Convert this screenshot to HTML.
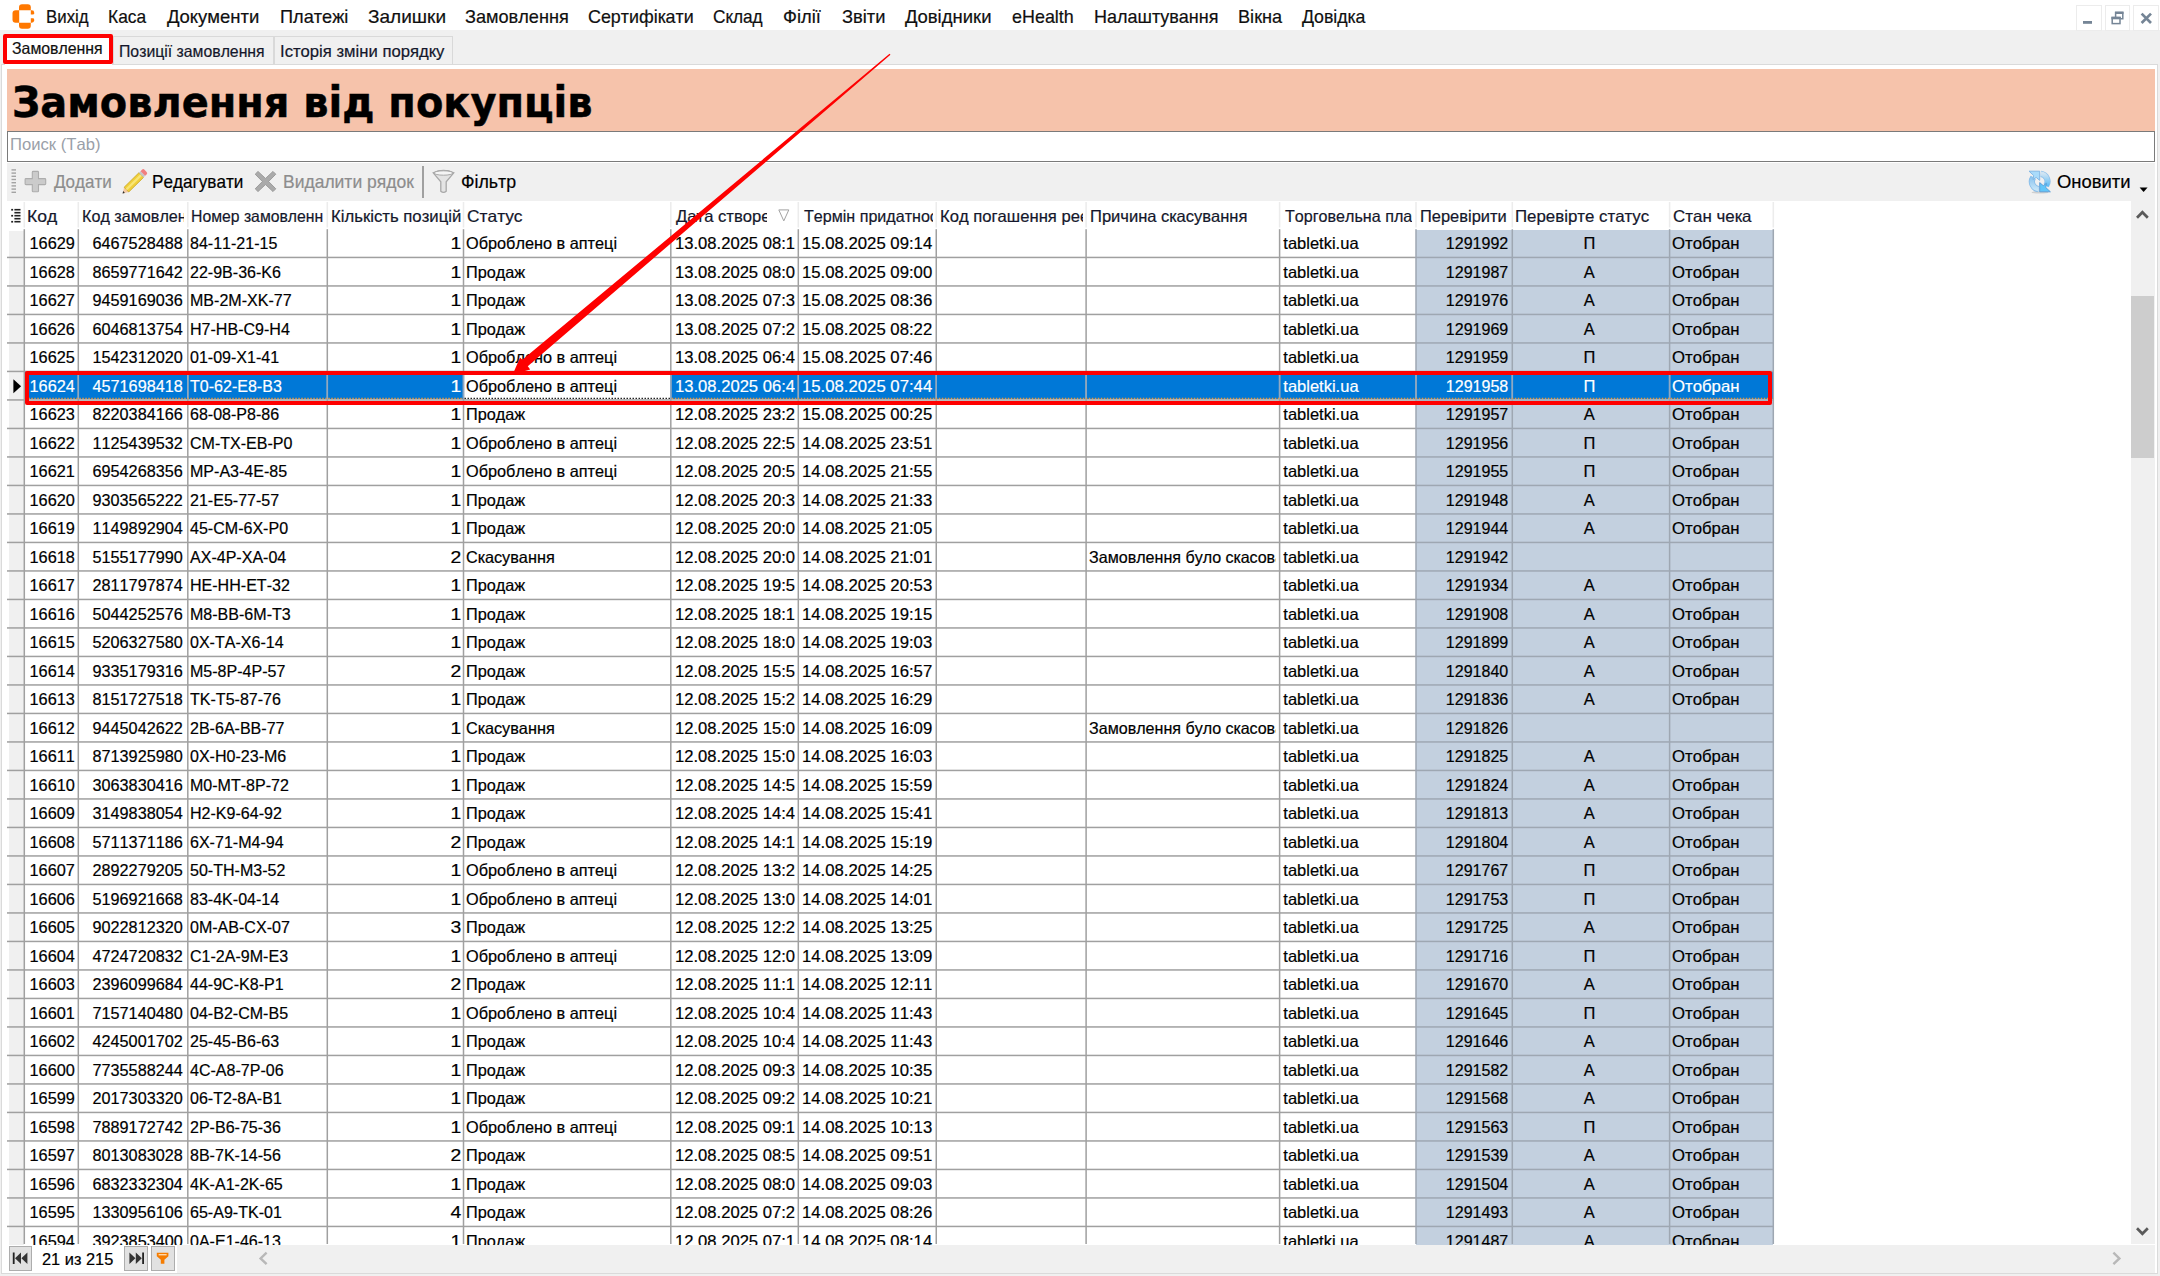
<!DOCTYPE html>
<html lang="uk"><head><meta charset="utf-8"><title>Замовлення від покупців</title>
<style>
html,body{margin:0;padding:0}
body{width:2160px;height:1276px;background:#f0f0f0;position:relative;overflow:hidden;font-family:"Liberation Sans",sans-serif;font-size:16.5px;color:#000;font-kerning:none}
div,span,svg{position:absolute;box-sizing:border-box}
.t{white-space:pre;transform-origin:0 0;line-height:1;-webkit-text-stroke:0.2px currentColor}
#menubar{left:0;top:0;width:2160px;height:30.2px;background:#fff}
.wb{top:5px;width:25.7px;height:25.7px;background:#fff;border:1px solid #ececec}
#page{left:1px;top:63.5px;width:2157px;height:1210px;background:#fff;border:1px solid #dadada}
.tab{top:36px;height:28px;background:#f0f0f0;border:1px solid #d9d9d9;border-bottom:none}
#title{left:7px;top:69px;width:2148px;height:62px;background:#f6c3ab}
#search{left:7px;top:131px;width:2148px;height:31px;background:#fff;border:1.5px solid #7a7a7a}
#toolbar{left:7px;top:163px;width:2148px;height:38px;background:#f0f0f0}
#grid{left:7px;top:201px;width:2124px;height:1043.6px;background:#fff;overflow:hidden}
#vscroll{left:2131px;top:201px;width:24px;height:1043px;background:#f0f0f0}
#thumb{left:2131px;top:295.5px;width:22.5px;height:162px;background:#cdcdcd}
#nav{left:7px;top:1244.6px;width:170px;height:28.4px;background:#fff}
#hscroll{left:177px;top:1244.6px;width:1978px;height:28.4px;background:#f0f0f0}
.nb{top:1246px;width:23.5px;height:24.5px;background:#e1e1e1;border:1px solid #adadad}
.c{overflow:hidden;height:28.5px}
.c>span{white-space:pre;line-height:1;top:5.8px;-webkit-text-stroke:0.2px currentColor}
.c>.l{transform-origin:0 0}
.c>.r{transform-origin:100% 0}
.c>.m{left:0;width:100%;text-align:center;transform-origin:50% 0}
.h{color:#14172b}
.h>span{top:7.0px}
.sel{color:#fff}
</style></head><body>
<div id="menubar"></div>
<svg style="left:11px;top:3px" width="26" height="27" viewBox="0 0 26 27" fill="#ff7800"><path d="M8 7.2 V4.2 Q8 1.2 11 1.2 H16.8 Q19.8 1.2 19.8 4.2 V7.2 Z"/><path d="M8 19.7 V22.75 Q8 25.75 11 25.75 H16.8 Q19.8 25.75 19.8 22.75 V19.7 Z"/><path d="M8.2 7.2 H4.7 Q1.5 7.2 1.5 10.4 V16.5 Q1.5 19.7 4.7 19.7 H8.2 Z"/><path d="M19.8 7.2 H20.8 Q23.2 7.2 23.2 9.6 V10.2 Q23.2 11.6 21.8 11.6 H19.8 Z"/><path d="M19.8 19.7 H20.8 Q23.2 19.7 23.2 17.3 V16.7 Q23.2 15.3 21.8 15.3 H19.8 Z"/></svg>
<span class="t" style="left:45.84px;top:8.06px;font-size:18.6px;transform:scaleX(0.9061);color:#101010">Вихід</span><span class="t" style="left:107.90px;top:8.06px;font-size:18.6px;transform:scaleX(0.9350);color:#101010">Каса</span><span class="t" style="left:167.45px;top:8.06px;font-size:18.6px;transform:scaleX(0.9956);color:#101010">Документи</span><span class="t" style="left:279.53px;top:8.06px;font-size:18.6px;transform:scaleX(0.9770);color:#101010">Платежі</span><span class="t" style="left:367.53px;top:8.06px;font-size:18.6px;transform:scaleX(1.0236);color:#101010">Залишки</span><span class="t" style="left:465.27px;top:8.06px;font-size:18.6px;transform:scaleX(0.9755);color:#101010">Замовлення</span><span class="t" style="left:588.34px;top:8.06px;font-size:18.6px;transform:scaleX(0.9619);color:#101010">Сертифікати</span><span class="t" style="left:713.37px;top:8.06px;font-size:18.6px;transform:scaleX(0.9263);color:#101010">Склад</span><span class="t" style="left:783.31px;top:8.06px;font-size:18.6px;transform:scaleX(0.9852);color:#101010">Філії</span><span class="t" style="left:841.96px;top:8.06px;font-size:18.6px;transform:scaleX(0.9833);color:#101010">Звіти</span><span class="t" style="left:905.45px;top:8.06px;font-size:18.6px;transform:scaleX(0.9942);color:#101010">Довідники</span><span class="t" style="left:1011.98px;top:8.06px;font-size:18.6px;transform:scaleX(0.9639);color:#101010">eHealth</span><span class="t" style="left:1093.55px;top:8.06px;font-size:18.6px;transform:scaleX(0.9678);color:#101010">Налаштування</span><span class="t" style="left:1237.54px;top:8.06px;font-size:18.6px;transform:scaleX(0.9760);color:#101010">Вікна</span><span class="t" style="left:1302.46px;top:8.06px;font-size:18.6px;transform:scaleX(0.9545);color:#101010">Довідка</span>
<div class="wb" style="left:2076px"></div><div class="wb" style="left:2104.6px"></div><div class="wb" style="left:2133px"></div><svg style="left:2076px;top:5px" width="84" height="26" viewBox="0 0 84 26" fill="none" stroke="#758596"><rect x="7" y="16" width="9" height="2.8" fill="#758596" stroke="none"/><path d="M39.6 12 v-4.4 h7.2 v6.2 h-2" stroke-width="1.5"/><path d="M39 7.8 h8.5" stroke-width="2.4"/><rect x="36.2" y="12.6" width="7.8" height="6" stroke-width="1.5"/><path d="M35.4 13 h9.4" stroke-width="2.6"/><path d="M65.6 8.6 l9.4 9.4 M75 8.6 l-9.4 9.4" stroke-width="2.7"/></svg>
<div class="tab" style="left:113px;width:161px"></div><div class="tab" style="left:273.5px;width:179px"></div>
<div id="page"></div>
<div style="left:5px;top:36px;width:107px;height:29px;background:#fff"></div>
<span class="t" style="left:12.12px;top:40.23px;font-size:16.5px;transform:scaleX(0.9606);color:#101010">Замовлення</span><span class="t" style="left:119.00px;top:43.03px;font-size:16.5px;transform:scaleX(0.9576);color:#14172b">Позиції замовлення</span><span class="t" style="left:280.49px;top:43.03px;font-size:16.5px;transform:scaleX(1.0096);color:#14172b">Історія зміни порядку</span>
<div style="left:3.2px;top:33.8px;width:109.8px;height:30.4px;border:4.3px solid #fe0000;border-radius:2px"></div>
<div id="title"></div><span class="t" style="font-family:'DejaVu Sans',sans-serif;font-weight:bold;font-kerning:none;-webkit-text-stroke:0.5px #000;left:12.23px;top:81.95px;font-size:42px;transform:scaleX(0.9496);">Замовлення від покупців</span>
<div id="search"></div><span class="t" style="left:9.54px;top:136.33px;font-size:16.5px;transform:scaleX(1.0080);color:#9aa0a8;-webkit-text-stroke:0">Поиск (Tab)</span>
<div id="toolbar"></div>
<svg style="left:11px;top:168px" width="6" height="26" viewBox="0 0 6 26"><rect x="0.5" y="1.2" width="4.5" height="1.4" fill="#a3a3a3"/><rect x="0.5" y="4.4" width="4.5" height="1.4" fill="#a3a3a3"/><rect x="0.5" y="7.6" width="4.5" height="1.4" fill="#a3a3a3"/><rect x="0.5" y="10.8" width="4.5" height="1.4" fill="#a3a3a3"/><rect x="0.5" y="14.0" width="4.5" height="1.4" fill="#a3a3a3"/><rect x="0.5" y="17.2" width="4.5" height="1.4" fill="#a3a3a3"/><rect x="0.5" y="20.4" width="4.5" height="1.4" fill="#a3a3a3"/><rect x="0.5" y="23.6" width="4.5" height="1.4" fill="#a3a3a3"/></svg><svg style="left:24px;top:170px" width="23" height="23" viewBox="0 0 23 23"><path d="M9.2 1.4 h4.4 q0.9 0 0.9 0.9 v6.3 h6.3 q0.9 0 0.9 0.9 v4.2 q0 0.9 -0.9 0.9 h-6.3 v6.3 q0 0.9 -0.9 0.9 h-4.4 q-0.9 0 -0.9 -0.9 v-6.3 h-6.3 q-0.9 0 -0.9 -0.9 v-4.2 q0 -0.9 0.9 -0.9 h6.3 v-6.3 q0 -0.9 0.9 -0.9 z" fill="#cbcbcb" stroke="#adadad" stroke-width="1.1"/></svg><svg style="left:120px;top:167px" width="29" height="29" viewBox="0 0 29 29"><g transform="translate(2.6 26.4) rotate(-44.5)"><path d="M0 0 l5.4 -3.3 v6.6 z" fill="#f3c9a3"/><path d="M0 0 l2 -1.25 v2.5 z" fill="#2b2b2b"/><rect x="5.4" y="-3.3" width="20.6" height="6.6" fill="#f0cf3a" stroke="#c5a21c" stroke-width="0.7"/><rect x="5.4" y="-1.2" width="20.6" height="2.2" fill="#f9e676"/><rect x="26" y="-3.3" width="2.4" height="6.6" fill="#c6c6c6"/><path d="M28.4 -3.3 h2 q1.8 0 1.8 1.8 v3 q0 1.8 -1.8 1.8 h-2 z" fill="#f17f7f"/></g></svg><svg style="left:253.5px;top:170px" width="23" height="23" viewBox="0 0 23 23"><path d="M4 1.4 l7.5 7 l7.5 -7 l2.8 2.8 l-7.2 7.3 l7.2 7.3 l-2.8 2.8 l-7.5 -7 l-7.5 7 l-2.8 -2.8 l7.2 -7.3 l-7.2 -7.3 z" fill="#aaaaaa" stroke="#909090" stroke-width="0.8"/></svg><div style="left:422.3px;top:165.5px;width:1.5px;height:32.5px;background:#a0a0a0"></div><svg style="left:432px;top:169px" width="23" height="26" viewBox="0 0 23 26"><path d="M1.2 3.8 q10.3 -4.6 20.6 0 l-7.6 9 v9.4 q-2.7 2.4 -5.4 0 v-9.4 z" fill="#e4e4e4" stroke="#a8a8a8" stroke-width="1.3"/><ellipse cx="11.5" cy="4" rx="9.4" ry="2.2" fill="#f5f5f5" stroke="#a8a8a8" stroke-width="1"/></svg><span class="t" style="left:54.18px;top:171.52px;font-size:19px;transform:scaleX(0.8956);color:#8d8d8d">Додати</span><span class="t" style="left:151.65px;top:171.52px;font-size:19px;transform:scaleX(0.9025);color:#000">Редагувати</span><span class="t" style="left:282.82px;top:171.52px;font-size:19px;transform:scaleX(0.9210);color:#8d8d8d">Видалити рядок</span><span class="t" style="left:461.27px;top:171.52px;font-size:19px;transform:scaleX(0.9345);color:#000">Фільтр</span><span class="t" style="left:2056.93px;top:171.52px;font-size:19px;transform:scaleX(0.9701);color:#000">Оновити</span><svg style="left:2028px;top:170px" width="24" height="24" viewBox="0 0 24 24"><defs><linearGradient id="ga" x1="0" y1="0" x2="0" y2="1"><stop offset="0" stop-color="#8cc4ef"/><stop offset="1" stop-color="#c4e4f8"/></linearGradient><linearGradient id="gb" x1="0" y1="1" x2="0" y2="0"><stop offset="0" stop-color="#5fbdf5"/><stop offset="1" stop-color="#cfe4f3"/></linearGradient></defs><ellipse cx="12" cy="22.4" rx="8.5" ry="1.2" fill="#cfcfcf"/><path d="M5.2 7.4 A7.6 7.6 0 0 0 10.6 19.2" fill="none" stroke="#86bbe8" stroke-width="6.2"/><path d="M5.2 7.4 A7.6 7.6 0 0 0 10.6 19.2" fill="none" stroke="url(#ga)" stroke-width="4.6"/><path d="M1 1.2 H11.7 V10.4 L8.2 7.4 L5 9.6 L5.6 5.4 z" fill="#a9dbfb" stroke="#7db3e3" stroke-width="0.9"/><path d="M18.2 15.6 A7.6 7.6 0 0 0 12.8 3.8" fill="none" stroke="#8fc0ea" stroke-width="6.2"/><path d="M18.2 15.6 A7.6 7.6 0 0 0 12.8 3.8" fill="none" stroke="url(#gb)" stroke-width="4.6"/><path d="M22.4 21.8 H11.7 V12.6 L15.2 15.6 L18.4 13.4 L17.8 17.6 z" fill="#62c6f9" stroke="#5b9bd5" stroke-width="0.9"/></svg><svg style="left:2139px;top:187px" width="10" height="6" viewBox="0 0 10 6"><path d="M0.6 0.6 h8 l-4 4.4 z" fill="#000"/></svg>
<div id="grid">
<div style="left:1.5px;top:30.19999999999999px;width:15px;height:1043px;background:#f0f0f0"></div><div style="left:1409px;top:28.69999999999999px;width:357.29999999999995px;height:1043px;background:#c3d0df"></div><div style="left:17.3px;top:171.2px;width:1749.0px;height:27.0px;background:#0078d7"></div><div style="left:457.25px;top:171.2px;width:205.79999999999995px;height:27.0px;background:#fff"></div>
<svg style="left:0;top:0" width="2124" height="1043" viewBox="7 201 2124 1043"><rect x="7" y="256.7" width="1409" height="1.5" fill="#a0a0a0"/><rect x="1416" y="256.7" width="357.29999999999995" height="1.5" fill="#9ea7b2"/><rect x="7" y="285.2" width="1409" height="1.5" fill="#a0a0a0"/><rect x="1416" y="285.2" width="357.29999999999995" height="1.5" fill="#9ea7b2"/><rect x="7" y="313.7" width="1409" height="1.5" fill="#a0a0a0"/><rect x="1416" y="313.7" width="357.29999999999995" height="1.5" fill="#9ea7b2"/><rect x="7" y="342.2" width="1409" height="1.5" fill="#a0a0a0"/><rect x="1416" y="342.2" width="357.29999999999995" height="1.5" fill="#9ea7b2"/><rect x="7" y="370.7" width="1409" height="1.5" fill="#a0a0a0"/><rect x="1416" y="370.7" width="357.29999999999995" height="1.5" fill="#9ea7b2"/><rect x="7" y="399.2" width="1409" height="1.5" fill="#a0a0a0"/><rect x="1416" y="399.2" width="357.29999999999995" height="1.5" fill="#9ea7b2"/><rect x="7" y="427.7" width="1409" height="1.5" fill="#a0a0a0"/><rect x="1416" y="427.7" width="357.29999999999995" height="1.5" fill="#9ea7b2"/><rect x="7" y="456.2" width="1409" height="1.5" fill="#a0a0a0"/><rect x="1416" y="456.2" width="357.29999999999995" height="1.5" fill="#9ea7b2"/><rect x="7" y="484.7" width="1409" height="1.5" fill="#a0a0a0"/><rect x="1416" y="484.7" width="357.29999999999995" height="1.5" fill="#9ea7b2"/><rect x="7" y="513.2" width="1409" height="1.5" fill="#a0a0a0"/><rect x="1416" y="513.2" width="357.29999999999995" height="1.5" fill="#9ea7b2"/><rect x="7" y="541.7" width="1409" height="1.5" fill="#a0a0a0"/><rect x="1416" y="541.7" width="357.29999999999995" height="1.5" fill="#9ea7b2"/><rect x="7" y="570.2" width="1409" height="1.5" fill="#a0a0a0"/><rect x="1416" y="570.2" width="357.29999999999995" height="1.5" fill="#9ea7b2"/><rect x="7" y="598.7" width="1409" height="1.5" fill="#a0a0a0"/><rect x="1416" y="598.7" width="357.29999999999995" height="1.5" fill="#9ea7b2"/><rect x="7" y="627.2" width="1409" height="1.5" fill="#a0a0a0"/><rect x="1416" y="627.2" width="357.29999999999995" height="1.5" fill="#9ea7b2"/><rect x="7" y="655.7" width="1409" height="1.5" fill="#a0a0a0"/><rect x="1416" y="655.7" width="357.29999999999995" height="1.5" fill="#9ea7b2"/><rect x="7" y="684.2" width="1409" height="1.5" fill="#a0a0a0"/><rect x="1416" y="684.2" width="357.29999999999995" height="1.5" fill="#9ea7b2"/><rect x="7" y="712.7" width="1409" height="1.5" fill="#a0a0a0"/><rect x="1416" y="712.7" width="357.29999999999995" height="1.5" fill="#9ea7b2"/><rect x="7" y="741.2" width="1409" height="1.5" fill="#a0a0a0"/><rect x="1416" y="741.2" width="357.29999999999995" height="1.5" fill="#9ea7b2"/><rect x="7" y="769.7" width="1409" height="1.5" fill="#a0a0a0"/><rect x="1416" y="769.7" width="357.29999999999995" height="1.5" fill="#9ea7b2"/><rect x="7" y="798.2" width="1409" height="1.5" fill="#a0a0a0"/><rect x="1416" y="798.2" width="357.29999999999995" height="1.5" fill="#9ea7b2"/><rect x="7" y="826.7" width="1409" height="1.5" fill="#a0a0a0"/><rect x="1416" y="826.7" width="357.29999999999995" height="1.5" fill="#9ea7b2"/><rect x="7" y="855.2" width="1409" height="1.5" fill="#a0a0a0"/><rect x="1416" y="855.2" width="357.29999999999995" height="1.5" fill="#9ea7b2"/><rect x="7" y="883.7" width="1409" height="1.5" fill="#a0a0a0"/><rect x="1416" y="883.7" width="357.29999999999995" height="1.5" fill="#9ea7b2"/><rect x="7" y="912.2" width="1409" height="1.5" fill="#a0a0a0"/><rect x="1416" y="912.2" width="357.29999999999995" height="1.5" fill="#9ea7b2"/><rect x="7" y="940.7" width="1409" height="1.5" fill="#a0a0a0"/><rect x="1416" y="940.7" width="357.29999999999995" height="1.5" fill="#9ea7b2"/><rect x="7" y="969.2" width="1409" height="1.5" fill="#a0a0a0"/><rect x="1416" y="969.2" width="357.29999999999995" height="1.5" fill="#9ea7b2"/><rect x="7" y="997.7" width="1409" height="1.5" fill="#a0a0a0"/><rect x="1416" y="997.7" width="357.29999999999995" height="1.5" fill="#9ea7b2"/><rect x="7" y="1026.2" width="1409" height="1.5" fill="#a0a0a0"/><rect x="1416" y="1026.2" width="357.29999999999995" height="1.5" fill="#9ea7b2"/><rect x="7" y="1054.7" width="1409" height="1.5" fill="#a0a0a0"/><rect x="1416" y="1054.7" width="357.29999999999995" height="1.5" fill="#9ea7b2"/><rect x="7" y="1083.2" width="1409" height="1.5" fill="#a0a0a0"/><rect x="1416" y="1083.2" width="357.29999999999995" height="1.5" fill="#9ea7b2"/><rect x="7" y="1111.7" width="1409" height="1.5" fill="#a0a0a0"/><rect x="1416" y="1111.7" width="357.29999999999995" height="1.5" fill="#9ea7b2"/><rect x="7" y="1140.2" width="1409" height="1.5" fill="#a0a0a0"/><rect x="1416" y="1140.2" width="357.29999999999995" height="1.5" fill="#9ea7b2"/><rect x="7" y="1168.7" width="1409" height="1.5" fill="#a0a0a0"/><rect x="1416" y="1168.7" width="357.29999999999995" height="1.5" fill="#9ea7b2"/><rect x="7" y="1197.2" width="1409" height="1.5" fill="#a0a0a0"/><rect x="1416" y="1197.2" width="357.29999999999995" height="1.5" fill="#9ea7b2"/><rect x="7" y="1225.7" width="1409" height="1.5" fill="#a0a0a0"/><rect x="1416" y="1225.7" width="357.29999999999995" height="1.5" fill="#9ea7b2"/><rect x="7" y="1254.2" width="1409" height="1.5" fill="#a0a0a0"/><rect x="1416" y="1254.2" width="357.29999999999995" height="1.5" fill="#9ea7b2"/><rect x="23.55" y="229.2" width="1.5" height="1020" fill="#a0a0a0"/><rect x="23.55" y="202" width="1.5" height="25.5" fill="#ececec"/><rect x="77.55" y="229.2" width="1.5" height="1020" fill="#a0a0a0"/><rect x="77.55" y="202" width="1.5" height="25.5" fill="#ececec"/><rect x="187.05" y="229.2" width="1.5" height="1020" fill="#a0a0a0"/><rect x="187.05" y="202" width="1.5" height="25.5" fill="#ececec"/><rect x="326.55" y="229.2" width="1.5" height="1020" fill="#a0a0a0"/><rect x="326.55" y="202" width="1.5" height="25.5" fill="#ececec"/><rect x="462.75" y="229.2" width="1.5" height="1020" fill="#a0a0a0"/><rect x="462.75" y="202" width="1.5" height="25.5" fill="#ececec"/><rect x="670.05" y="229.2" width="1.5" height="1020" fill="#a0a0a0"/><rect x="670.05" y="202" width="1.5" height="25.5" fill="#ececec"/><rect x="797.55" y="229.2" width="1.5" height="1020" fill="#a0a0a0"/><rect x="797.55" y="202" width="1.5" height="25.5" fill="#ececec"/><rect x="935.5" y="229.2" width="1.5" height="1020" fill="#a0a0a0"/><rect x="935.5" y="202" width="1.5" height="25.5" fill="#ececec"/><rect x="1085.35" y="229.2" width="1.5" height="1020" fill="#a0a0a0"/><rect x="1085.35" y="202" width="1.5" height="25.5" fill="#ececec"/><rect x="1278.85" y="229.2" width="1.5" height="1020" fill="#a0a0a0"/><rect x="1278.85" y="202" width="1.5" height="25.5" fill="#ececec"/><rect x="1415.25" y="229.2" width="1.5" height="1020" fill="#9ea7b2"/><rect x="1415.25" y="202" width="1.5" height="25.5" fill="#ececec"/><rect x="1511.55" y="229.2" width="1.5" height="1020" fill="#9ea7b2"/><rect x="1511.55" y="202" width="1.5" height="25.5" fill="#ececec"/><rect x="1668.85" y="229.2" width="1.5" height="1020" fill="#9ea7b2"/><rect x="1668.85" y="202" width="1.5" height="25.5" fill="#ececec"/><rect x="1772.55" y="229.2" width="1.5" height="1020" fill="#9ea7b2"/><rect x="1772.55" y="202" width="1.5" height="25.5" fill="#ececec"/><rect x="77.55" y="372.2" width="1.5" height="27.0" fill="#8fa9c4"/><rect x="187.05" y="372.2" width="1.5" height="27.0" fill="#8fa9c4"/><rect x="326.55" y="372.2" width="1.5" height="27.0" fill="#8fa9c4"/><rect x="462.75" y="372.2" width="1.5" height="27.0" fill="#8fa9c4"/><rect x="670.05" y="372.2" width="1.5" height="27.0" fill="#8fa9c4"/><rect x="797.55" y="372.2" width="1.5" height="27.0" fill="#8fa9c4"/><rect x="935.5" y="372.2" width="1.5" height="27.0" fill="#8fa9c4"/><rect x="1085.35" y="372.2" width="1.5" height="27.0" fill="#8fa9c4"/><rect x="1278.85" y="372.2" width="1.5" height="27.0" fill="#8fa9c4"/><rect x="1415.25" y="372.2" width="1.5" height="27.0" fill="#8fa9c4"/><rect x="1511.55" y="372.2" width="1.5" height="27.0" fill="#8fa9c4"/><rect x="1668.85" y="372.2" width="1.5" height="27.0" fill="#8fa9c4"/><path d="M25.3 398.3 H463.5" stroke="#e8963c" stroke-width="1.2" stroke-dasharray="1.5 1.5" fill="none"/><path d="M464.5 398.3 H670.8" stroke="#222" stroke-width="1.2" stroke-dasharray="1.5 1.5" fill="none"/><path d="M671.8 398.3 H1773.3" stroke="#e8963c" stroke-width="1.2" stroke-dasharray="1.5 1.5" fill="none"/></svg>
<div class="c h" style="left:18.05px;top:0;width:52.50px"><span class="l" style="left:2.37px;transform:scaleX(1.0648)">Код</span></div><div class="c h" style="left:72.05px;top:0;width:104.85px"><span class="l" style="left:2.93px;transform:scaleX(0.9796)">Код замовлення</span></div><div class="c h" style="left:181.55px;top:0;width:134.75px"><span class="l" style="left:2.76px;transform:scaleX(0.9551)">Номер замовлення</span></div><div class="c h" style="left:321.05px;top:0;width:134.70px"><span class="l" style="left:2.68px;transform:scaleX(1.0131)">Кількість позицій</span></div><div class="c h" style="left:457.25px;top:0;width:205.80px"><span class="l" style="left:3.21px;transform:scaleX(1.0534)">Статус</span></div><div class="c h" style="left:664.55px;top:0;width:95.45px"><span class="l" style="left:4.45px;transform:scaleX(1.0083)">Дата створення</span></div><div class="c h" style="left:792.05px;top:0;width:133.95px"><span class="l" style="left:4.46px;transform:scaleX(0.9747)">Термін придатності</span></div><div class="c h" style="left:930.00px;top:0;width:145.50px"><span class="l" style="left:3.14px;transform:scaleX(1.0084)">Код погашення реєстру</span></div><div class="c h" style="left:1079.85px;top:0;width:192.00px"><span class="l" style="left:2.90px;transform:scaleX(1.0016)">Причина скасування</span></div><div class="c h" style="left:1273.35px;top:0;width:131.65px"><span class="l" style="left:4.71px;transform:scaleX(0.9758)">Торговельна платформа</span></div><div class="c h" style="left:1409.75px;top:0;width:94.80px"><span class="l" style="left:3.40px;transform:scaleX(0.9964)">Перевірити</span></div><div class="c h" style="left:1506.05px;top:0;width:155.80px"><span class="l" style="left:2.17px;transform:scaleX(1.0212)">Перевірте статус</span></div><div class="c h" style="left:1663.35px;top:0;width:102.20px"><span class="l" style="left:2.88px;transform:scaleX(1.0264)">Стан чека</span></div>
<svg style="left:4px;top:6.5px" width="10" height="16" viewBox="0 0 10 16"><rect x="3.4" y="0.90" width="6.1" height="1.6" fill="#222"/><rect x="3.4" y="3.90" width="6.1" height="1.6" fill="#222"/><rect x="3.4" y="6.90" width="6.1" height="1.6" fill="#222"/><rect x="3.4" y="9.90" width="6.1" height="1.6" fill="#222"/><rect x="3.4" y="12.90" width="6.1" height="1.6" fill="#222"/><rect x="0.2" y="0.90" width="1.9" height="1.7" fill="#222"/><rect x="0.2" y="6.90" width="1.9" height="1.7" fill="#222"/><rect x="0.2" y="12.90" width="1.9" height="1.7" fill="#222"/></svg><svg style="left:770.5px;top:7.5px" width="12" height="13" viewBox="0 0 12 13"><path d="M0.8 0.9 h10 l-5 11 z" fill="#fff" stroke="#a2a2a2" stroke-width="1"/></svg>
<div class="c" style="left:18.05px;top:28.70px;width:52.50px"><span class="r" style="right:2.92px;transform:scaleX(0.9886)">16629</span></div><div class="c" style="left:72.05px;top:28.70px;width:108.00px"><span class="r" style="right:3.80px;transform:scaleX(0.9834)">6467528488</span></div><div class="c" style="left:181.55px;top:28.70px;width:138.00px"><span class="l" style="left:1.72px;transform:scaleX(0.9721)">84-11-21-15</span></div><div class="c" style="left:321.05px;top:28.70px;width:134.70px"><span class="r" style="right:1.75px;transform:scaleX(1.1733)">1</span></div><div class="c" style="left:457.25px;top:28.70px;width:205.80px"><span class="l" style="left:2.01px;transform:scaleX(0.9868)">Оброблено в аптеці</span></div><div class="c" style="left:664.55px;top:28.70px;width:123.45px"><span class="l" style="left:3.59px;transform:scaleX(1.0064)">13.08.2025 08:14</span></div><div class="c" style="left:792.05px;top:28.70px;width:136.45px"><span class="l" style="left:2.68px;transform:scaleX(1.0138)">15.08.2025 09:14</span></div><div class="c" style="left:1273.35px;top:28.70px;width:134.90px"><span class="l" style="left:3.00px;transform:scaleX(1.0000)">tabletki.ua</span></div><div class="c" style="left:1409.75px;top:28.70px;width:94.80px"><span class="r" style="right:3.32px;transform:scaleX(0.9719)">1291992</span></div><div class="c" style="left:1506.05px;top:28.70px;width:155.80px"><span class="m" style="left:-1.65px">П</span></div><div class="c" style="left:1663.35px;top:28.70px;width:102.20px"><span class="l" style="left:1.39px;transform:scaleX(1.0155)">Отобран</span></div>
<div class="c" style="left:18.05px;top:57.20px;width:52.50px"><span class="r" style="right:2.92px;transform:scaleX(0.9886)">16628</span></div><div class="c" style="left:72.05px;top:57.20px;width:108.00px"><span class="r" style="right:3.80px;transform:scaleX(0.9834)">8659771642</span></div><div class="c" style="left:181.55px;top:57.20px;width:138.00px"><span class="l" style="left:1.72px;transform:scaleX(0.9721)">22-9B-36-K6</span></div><div class="c" style="left:321.05px;top:57.20px;width:134.70px"><span class="r" style="right:1.75px;transform:scaleX(1.1733)">1</span></div><div class="c" style="left:457.25px;top:57.20px;width:205.80px"><span class="l" style="left:2.01px;transform:scaleX(0.9868)">Продаж</span></div><div class="c" style="left:664.55px;top:57.20px;width:123.45px"><span class="l" style="left:3.59px;transform:scaleX(1.0064)">13.08.2025 08:00</span></div><div class="c" style="left:792.05px;top:57.20px;width:136.45px"><span class="l" style="left:2.68px;transform:scaleX(1.0138)">15.08.2025 09:00</span></div><div class="c" style="left:1273.35px;top:57.20px;width:134.90px"><span class="l" style="left:3.00px;transform:scaleX(1.0000)">tabletki.ua</span></div><div class="c" style="left:1409.75px;top:57.20px;width:94.80px"><span class="r" style="right:3.32px;transform:scaleX(0.9719)">1291987</span></div><div class="c" style="left:1506.05px;top:57.20px;width:155.80px"><span class="m" style="left:-1.65px">А</span></div><div class="c" style="left:1663.35px;top:57.20px;width:102.20px"><span class="l" style="left:1.39px;transform:scaleX(1.0155)">Отобран</span></div>
<div class="c" style="left:18.05px;top:85.70px;width:52.50px"><span class="r" style="right:2.92px;transform:scaleX(0.9886)">16627</span></div><div class="c" style="left:72.05px;top:85.70px;width:108.00px"><span class="r" style="right:3.80px;transform:scaleX(0.9834)">9459169036</span></div><div class="c" style="left:181.55px;top:85.70px;width:138.00px"><span class="l" style="left:1.72px;transform:scaleX(0.9721)">MB-2M-XK-77</span></div><div class="c" style="left:321.05px;top:85.70px;width:134.70px"><span class="r" style="right:1.75px;transform:scaleX(1.1733)">1</span></div><div class="c" style="left:457.25px;top:85.70px;width:205.80px"><span class="l" style="left:2.01px;transform:scaleX(0.9868)">Продаж</span></div><div class="c" style="left:664.55px;top:85.70px;width:123.45px"><span class="l" style="left:3.59px;transform:scaleX(1.0064)">13.08.2025 07:36</span></div><div class="c" style="left:792.05px;top:85.70px;width:136.45px"><span class="l" style="left:2.68px;transform:scaleX(1.0138)">15.08.2025 08:36</span></div><div class="c" style="left:1273.35px;top:85.70px;width:134.90px"><span class="l" style="left:3.00px;transform:scaleX(1.0000)">tabletki.ua</span></div><div class="c" style="left:1409.75px;top:85.70px;width:94.80px"><span class="r" style="right:3.32px;transform:scaleX(0.9719)">1291976</span></div><div class="c" style="left:1506.05px;top:85.70px;width:155.80px"><span class="m" style="left:-1.65px">А</span></div><div class="c" style="left:1663.35px;top:85.70px;width:102.20px"><span class="l" style="left:1.39px;transform:scaleX(1.0155)">Отобран</span></div>
<div class="c" style="left:18.05px;top:114.20px;width:52.50px"><span class="r" style="right:2.92px;transform:scaleX(0.9886)">16626</span></div><div class="c" style="left:72.05px;top:114.20px;width:108.00px"><span class="r" style="right:3.80px;transform:scaleX(0.9834)">6046813754</span></div><div class="c" style="left:181.55px;top:114.20px;width:138.00px"><span class="l" style="left:1.72px;transform:scaleX(0.9721)">H7-HB-C9-H4</span></div><div class="c" style="left:321.05px;top:114.20px;width:134.70px"><span class="r" style="right:1.75px;transform:scaleX(1.1733)">1</span></div><div class="c" style="left:457.25px;top:114.20px;width:205.80px"><span class="l" style="left:2.01px;transform:scaleX(0.9868)">Продаж</span></div><div class="c" style="left:664.55px;top:114.20px;width:123.45px"><span class="l" style="left:3.59px;transform:scaleX(1.0064)">13.08.2025 07:22</span></div><div class="c" style="left:792.05px;top:114.20px;width:136.45px"><span class="l" style="left:2.68px;transform:scaleX(1.0138)">15.08.2025 08:22</span></div><div class="c" style="left:1273.35px;top:114.20px;width:134.90px"><span class="l" style="left:3.00px;transform:scaleX(1.0000)">tabletki.ua</span></div><div class="c" style="left:1409.75px;top:114.20px;width:94.80px"><span class="r" style="right:3.32px;transform:scaleX(0.9719)">1291969</span></div><div class="c" style="left:1506.05px;top:114.20px;width:155.80px"><span class="m" style="left:-1.65px">А</span></div><div class="c" style="left:1663.35px;top:114.20px;width:102.20px"><span class="l" style="left:1.39px;transform:scaleX(1.0155)">Отобран</span></div>
<div class="c" style="left:18.05px;top:142.70px;width:52.50px"><span class="r" style="right:2.92px;transform:scaleX(0.9886)">16625</span></div><div class="c" style="left:72.05px;top:142.70px;width:108.00px"><span class="r" style="right:3.80px;transform:scaleX(0.9834)">1542312020</span></div><div class="c" style="left:181.55px;top:142.70px;width:138.00px"><span class="l" style="left:1.72px;transform:scaleX(0.9721)">01-09-X1-41</span></div><div class="c" style="left:321.05px;top:142.70px;width:134.70px"><span class="r" style="right:1.75px;transform:scaleX(1.1733)">1</span></div><div class="c" style="left:457.25px;top:142.70px;width:205.80px"><span class="l" style="left:2.01px;transform:scaleX(0.9868)">Оброблено в аптеці</span></div><div class="c" style="left:664.55px;top:142.70px;width:123.45px"><span class="l" style="left:3.59px;transform:scaleX(1.0064)">13.08.2025 06:46</span></div><div class="c" style="left:792.05px;top:142.70px;width:136.45px"><span class="l" style="left:2.68px;transform:scaleX(1.0138)">15.08.2025 07:46</span></div><div class="c" style="left:1273.35px;top:142.70px;width:134.90px"><span class="l" style="left:3.00px;transform:scaleX(1.0000)">tabletki.ua</span></div><div class="c" style="left:1409.75px;top:142.70px;width:94.80px"><span class="r" style="right:3.32px;transform:scaleX(0.9719)">1291959</span></div><div class="c" style="left:1506.05px;top:142.70px;width:155.80px"><span class="m" style="left:-1.65px">П</span></div><div class="c" style="left:1663.35px;top:142.70px;width:102.20px"><span class="l" style="left:1.39px;transform:scaleX(1.0155)">Отобран</span></div>
<div class="c sel" style="left:18.05px;top:171.20px;width:52.50px"><span class="r" style="right:2.92px;transform:scaleX(0.9886)">16624</span></div><div class="c sel" style="left:72.05px;top:171.20px;width:108.00px"><span class="r" style="right:3.80px;transform:scaleX(0.9834)">4571698418</span></div><div class="c sel" style="left:181.55px;top:171.20px;width:138.00px"><span class="l" style="left:1.72px;transform:scaleX(0.9721)">T0-62-E8-B3</span></div><div class="c sel" style="left:321.05px;top:171.20px;width:134.70px"><span class="r" style="right:1.75px;transform:scaleX(1.1733)">1</span></div><div class="c" style="left:457.25px;top:171.20px;width:205.80px"><span class="l" style="left:2.01px;transform:scaleX(0.9868)">Оброблено в аптеці</span></div><div class="c sel" style="left:664.55px;top:171.20px;width:123.45px"><span class="l" style="left:3.59px;transform:scaleX(1.0064)">13.08.2025 06:44</span></div><div class="c sel" style="left:792.05px;top:171.20px;width:136.45px"><span class="l" style="left:2.68px;transform:scaleX(1.0138)">15.08.2025 07:44</span></div><div class="c sel" style="left:1273.35px;top:171.20px;width:134.90px"><span class="l" style="left:3.00px;transform:scaleX(1.0000)">tabletki.ua</span></div><div class="c sel" style="left:1409.75px;top:171.20px;width:94.80px"><span class="r" style="right:3.32px;transform:scaleX(0.9719)">1291958</span></div><div class="c sel" style="left:1506.05px;top:171.20px;width:155.80px"><span class="m" style="left:-1.65px">П</span></div><div class="c sel" style="left:1663.35px;top:171.20px;width:102.20px"><span class="l" style="left:1.39px;transform:scaleX(1.0155)">Отобран</span></div>
<div class="c" style="left:18.05px;top:199.70px;width:52.50px"><span class="r" style="right:2.92px;transform:scaleX(0.9886)">16623</span></div><div class="c" style="left:72.05px;top:199.70px;width:108.00px"><span class="r" style="right:3.80px;transform:scaleX(0.9834)">8220384166</span></div><div class="c" style="left:181.55px;top:199.70px;width:138.00px"><span class="l" style="left:1.72px;transform:scaleX(0.9721)">68-08-P8-86</span></div><div class="c" style="left:321.05px;top:199.70px;width:134.70px"><span class="r" style="right:1.75px;transform:scaleX(1.1733)">1</span></div><div class="c" style="left:457.25px;top:199.70px;width:205.80px"><span class="l" style="left:2.01px;transform:scaleX(0.9868)">Продаж</span></div><div class="c" style="left:664.55px;top:199.70px;width:123.45px"><span class="l" style="left:3.59px;transform:scaleX(1.0064)">12.08.2025 23:25</span></div><div class="c" style="left:792.05px;top:199.70px;width:136.45px"><span class="l" style="left:2.68px;transform:scaleX(1.0138)">15.08.2025 00:25</span></div><div class="c" style="left:1273.35px;top:199.70px;width:134.90px"><span class="l" style="left:3.00px;transform:scaleX(1.0000)">tabletki.ua</span></div><div class="c" style="left:1409.75px;top:199.70px;width:94.80px"><span class="r" style="right:3.32px;transform:scaleX(0.9719)">1291957</span></div><div class="c" style="left:1506.05px;top:199.70px;width:155.80px"><span class="m" style="left:-1.65px">А</span></div><div class="c" style="left:1663.35px;top:199.70px;width:102.20px"><span class="l" style="left:1.39px;transform:scaleX(1.0155)">Отобран</span></div>
<div class="c" style="left:18.05px;top:228.20px;width:52.50px"><span class="r" style="right:2.92px;transform:scaleX(0.9886)">16622</span></div><div class="c" style="left:72.05px;top:228.20px;width:108.00px"><span class="r" style="right:3.80px;transform:scaleX(0.9834)">1125439532</span></div><div class="c" style="left:181.55px;top:228.20px;width:138.00px"><span class="l" style="left:1.72px;transform:scaleX(0.9721)">CM-TX-EB-P0</span></div><div class="c" style="left:321.05px;top:228.20px;width:134.70px"><span class="r" style="right:1.75px;transform:scaleX(1.1733)">1</span></div><div class="c" style="left:457.25px;top:228.20px;width:205.80px"><span class="l" style="left:2.01px;transform:scaleX(0.9868)">Оброблено в аптеці</span></div><div class="c" style="left:664.55px;top:228.20px;width:123.45px"><span class="l" style="left:3.59px;transform:scaleX(1.0064)">12.08.2025 22:51</span></div><div class="c" style="left:792.05px;top:228.20px;width:136.45px"><span class="l" style="left:2.68px;transform:scaleX(1.0138)">14.08.2025 23:51</span></div><div class="c" style="left:1273.35px;top:228.20px;width:134.90px"><span class="l" style="left:3.00px;transform:scaleX(1.0000)">tabletki.ua</span></div><div class="c" style="left:1409.75px;top:228.20px;width:94.80px"><span class="r" style="right:3.32px;transform:scaleX(0.9719)">1291956</span></div><div class="c" style="left:1506.05px;top:228.20px;width:155.80px"><span class="m" style="left:-1.65px">П</span></div><div class="c" style="left:1663.35px;top:228.20px;width:102.20px"><span class="l" style="left:1.39px;transform:scaleX(1.0155)">Отобран</span></div>
<div class="c" style="left:18.05px;top:256.70px;width:52.50px"><span class="r" style="right:2.92px;transform:scaleX(0.9886)">16621</span></div><div class="c" style="left:72.05px;top:256.70px;width:108.00px"><span class="r" style="right:3.80px;transform:scaleX(0.9834)">6954268356</span></div><div class="c" style="left:181.55px;top:256.70px;width:138.00px"><span class="l" style="left:1.72px;transform:scaleX(0.9721)">MP-A3-4E-85</span></div><div class="c" style="left:321.05px;top:256.70px;width:134.70px"><span class="r" style="right:1.75px;transform:scaleX(1.1733)">1</span></div><div class="c" style="left:457.25px;top:256.70px;width:205.80px"><span class="l" style="left:2.01px;transform:scaleX(0.9868)">Оброблено в аптеці</span></div><div class="c" style="left:664.55px;top:256.70px;width:123.45px"><span class="l" style="left:3.59px;transform:scaleX(1.0064)">12.08.2025 20:55</span></div><div class="c" style="left:792.05px;top:256.70px;width:136.45px"><span class="l" style="left:2.68px;transform:scaleX(1.0138)">14.08.2025 21:55</span></div><div class="c" style="left:1273.35px;top:256.70px;width:134.90px"><span class="l" style="left:3.00px;transform:scaleX(1.0000)">tabletki.ua</span></div><div class="c" style="left:1409.75px;top:256.70px;width:94.80px"><span class="r" style="right:3.32px;transform:scaleX(0.9719)">1291955</span></div><div class="c" style="left:1506.05px;top:256.70px;width:155.80px"><span class="m" style="left:-1.65px">П</span></div><div class="c" style="left:1663.35px;top:256.70px;width:102.20px"><span class="l" style="left:1.39px;transform:scaleX(1.0155)">Отобран</span></div>
<div class="c" style="left:18.05px;top:285.20px;width:52.50px"><span class="r" style="right:2.92px;transform:scaleX(0.9886)">16620</span></div><div class="c" style="left:72.05px;top:285.20px;width:108.00px"><span class="r" style="right:3.80px;transform:scaleX(0.9834)">9303565222</span></div><div class="c" style="left:181.55px;top:285.20px;width:138.00px"><span class="l" style="left:1.72px;transform:scaleX(0.9721)">21-E5-77-57</span></div><div class="c" style="left:321.05px;top:285.20px;width:134.70px"><span class="r" style="right:1.75px;transform:scaleX(1.1733)">1</span></div><div class="c" style="left:457.25px;top:285.20px;width:205.80px"><span class="l" style="left:2.01px;transform:scaleX(0.9868)">Продаж</span></div><div class="c" style="left:664.55px;top:285.20px;width:123.45px"><span class="l" style="left:3.59px;transform:scaleX(1.0064)">12.08.2025 20:33</span></div><div class="c" style="left:792.05px;top:285.20px;width:136.45px"><span class="l" style="left:2.68px;transform:scaleX(1.0138)">14.08.2025 21:33</span></div><div class="c" style="left:1273.35px;top:285.20px;width:134.90px"><span class="l" style="left:3.00px;transform:scaleX(1.0000)">tabletki.ua</span></div><div class="c" style="left:1409.75px;top:285.20px;width:94.80px"><span class="r" style="right:3.32px;transform:scaleX(0.9719)">1291948</span></div><div class="c" style="left:1506.05px;top:285.20px;width:155.80px"><span class="m" style="left:-1.65px">А</span></div><div class="c" style="left:1663.35px;top:285.20px;width:102.20px"><span class="l" style="left:1.39px;transform:scaleX(1.0155)">Отобран</span></div>
<div class="c" style="left:18.05px;top:313.70px;width:52.50px"><span class="r" style="right:2.92px;transform:scaleX(0.9886)">16619</span></div><div class="c" style="left:72.05px;top:313.70px;width:108.00px"><span class="r" style="right:3.80px;transform:scaleX(0.9834)">1149892904</span></div><div class="c" style="left:181.55px;top:313.70px;width:138.00px"><span class="l" style="left:1.72px;transform:scaleX(0.9721)">45-CM-6X-P0</span></div><div class="c" style="left:321.05px;top:313.70px;width:134.70px"><span class="r" style="right:1.75px;transform:scaleX(1.1733)">1</span></div><div class="c" style="left:457.25px;top:313.70px;width:205.80px"><span class="l" style="left:2.01px;transform:scaleX(0.9868)">Продаж</span></div><div class="c" style="left:664.55px;top:313.70px;width:123.45px"><span class="l" style="left:3.59px;transform:scaleX(1.0064)">12.08.2025 20:05</span></div><div class="c" style="left:792.05px;top:313.70px;width:136.45px"><span class="l" style="left:2.68px;transform:scaleX(1.0138)">14.08.2025 21:05</span></div><div class="c" style="left:1273.35px;top:313.70px;width:134.90px"><span class="l" style="left:3.00px;transform:scaleX(1.0000)">tabletki.ua</span></div><div class="c" style="left:1409.75px;top:313.70px;width:94.80px"><span class="r" style="right:3.32px;transform:scaleX(0.9719)">1291944</span></div><div class="c" style="left:1506.05px;top:313.70px;width:155.80px"><span class="m" style="left:-1.65px">А</span></div><div class="c" style="left:1663.35px;top:313.70px;width:102.20px"><span class="l" style="left:1.39px;transform:scaleX(1.0155)">Отобран</span></div>
<div class="c" style="left:18.05px;top:342.20px;width:52.50px"><span class="r" style="right:2.92px;transform:scaleX(0.9886)">16618</span></div><div class="c" style="left:72.05px;top:342.20px;width:108.00px"><span class="r" style="right:3.80px;transform:scaleX(0.9834)">5155177990</span></div><div class="c" style="left:181.55px;top:342.20px;width:138.00px"><span class="l" style="left:1.72px;transform:scaleX(0.9721)">AX-4P-XA-04</span></div><div class="c" style="left:321.05px;top:342.20px;width:134.70px"><span class="r" style="right:1.75px;transform:scaleX(1.1733)">2</span></div><div class="c" style="left:457.25px;top:342.20px;width:205.80px"><span class="l" style="left:2.01px;transform:scaleX(0.9868)">Скасування</span></div><div class="c" style="left:664.55px;top:342.20px;width:123.45px"><span class="l" style="left:3.59px;transform:scaleX(1.0064)">12.08.2025 20:01</span></div><div class="c" style="left:792.05px;top:342.20px;width:136.45px"><span class="l" style="left:2.68px;transform:scaleX(1.0138)">14.08.2025 21:01</span></div><div class="c" style="left:1079.85px;top:342.20px;width:189.15px"><span class="l" style="left:2.06px;transform:scaleX(0.9750)">Замовлення було скасовано</span></div><div class="c" style="left:1273.35px;top:342.20px;width:134.90px"><span class="l" style="left:3.00px;transform:scaleX(1.0000)">tabletki.ua</span></div><div class="c" style="left:1409.75px;top:342.20px;width:94.80px"><span class="r" style="right:3.32px;transform:scaleX(0.9719)">1291942</span></div>
<div class="c" style="left:18.05px;top:370.70px;width:52.50px"><span class="r" style="right:2.92px;transform:scaleX(0.9886)">16617</span></div><div class="c" style="left:72.05px;top:370.70px;width:108.00px"><span class="r" style="right:3.80px;transform:scaleX(0.9834)">2811797874</span></div><div class="c" style="left:181.55px;top:370.70px;width:138.00px"><span class="l" style="left:1.72px;transform:scaleX(0.9721)">HE-HH-ET-32</span></div><div class="c" style="left:321.05px;top:370.70px;width:134.70px"><span class="r" style="right:1.75px;transform:scaleX(1.1733)">1</span></div><div class="c" style="left:457.25px;top:370.70px;width:205.80px"><span class="l" style="left:2.01px;transform:scaleX(0.9868)">Продаж</span></div><div class="c" style="left:664.55px;top:370.70px;width:123.45px"><span class="l" style="left:3.59px;transform:scaleX(1.0064)">12.08.2025 19:53</span></div><div class="c" style="left:792.05px;top:370.70px;width:136.45px"><span class="l" style="left:2.68px;transform:scaleX(1.0138)">14.08.2025 20:53</span></div><div class="c" style="left:1273.35px;top:370.70px;width:134.90px"><span class="l" style="left:3.00px;transform:scaleX(1.0000)">tabletki.ua</span></div><div class="c" style="left:1409.75px;top:370.70px;width:94.80px"><span class="r" style="right:3.32px;transform:scaleX(0.9719)">1291934</span></div><div class="c" style="left:1506.05px;top:370.70px;width:155.80px"><span class="m" style="left:-1.65px">А</span></div><div class="c" style="left:1663.35px;top:370.70px;width:102.20px"><span class="l" style="left:1.39px;transform:scaleX(1.0155)">Отобран</span></div>
<div class="c" style="left:18.05px;top:399.20px;width:52.50px"><span class="r" style="right:2.92px;transform:scaleX(0.9886)">16616</span></div><div class="c" style="left:72.05px;top:399.20px;width:108.00px"><span class="r" style="right:3.80px;transform:scaleX(0.9834)">5044252576</span></div><div class="c" style="left:181.55px;top:399.20px;width:138.00px"><span class="l" style="left:1.72px;transform:scaleX(0.9721)">M8-BB-6M-T3</span></div><div class="c" style="left:321.05px;top:399.20px;width:134.70px"><span class="r" style="right:1.75px;transform:scaleX(1.1733)">1</span></div><div class="c" style="left:457.25px;top:399.20px;width:205.80px"><span class="l" style="left:2.01px;transform:scaleX(0.9868)">Продаж</span></div><div class="c" style="left:664.55px;top:399.20px;width:123.45px"><span class="l" style="left:3.59px;transform:scaleX(1.0064)">12.08.2025 18:15</span></div><div class="c" style="left:792.05px;top:399.20px;width:136.45px"><span class="l" style="left:2.68px;transform:scaleX(1.0138)">14.08.2025 19:15</span></div><div class="c" style="left:1273.35px;top:399.20px;width:134.90px"><span class="l" style="left:3.00px;transform:scaleX(1.0000)">tabletki.ua</span></div><div class="c" style="left:1409.75px;top:399.20px;width:94.80px"><span class="r" style="right:3.32px;transform:scaleX(0.9719)">1291908</span></div><div class="c" style="left:1506.05px;top:399.20px;width:155.80px"><span class="m" style="left:-1.65px">А</span></div><div class="c" style="left:1663.35px;top:399.20px;width:102.20px"><span class="l" style="left:1.39px;transform:scaleX(1.0155)">Отобран</span></div>
<div class="c" style="left:18.05px;top:427.70px;width:52.50px"><span class="r" style="right:2.92px;transform:scaleX(0.9886)">16615</span></div><div class="c" style="left:72.05px;top:427.70px;width:108.00px"><span class="r" style="right:3.80px;transform:scaleX(0.9834)">5206327580</span></div><div class="c" style="left:181.55px;top:427.70px;width:138.00px"><span class="l" style="left:1.72px;transform:scaleX(0.9721)">0X-TA-X6-14</span></div><div class="c" style="left:321.05px;top:427.70px;width:134.70px"><span class="r" style="right:1.75px;transform:scaleX(1.1733)">1</span></div><div class="c" style="left:457.25px;top:427.70px;width:205.80px"><span class="l" style="left:2.01px;transform:scaleX(0.9868)">Продаж</span></div><div class="c" style="left:664.55px;top:427.70px;width:123.45px"><span class="l" style="left:3.59px;transform:scaleX(1.0064)">12.08.2025 18:03</span></div><div class="c" style="left:792.05px;top:427.70px;width:136.45px"><span class="l" style="left:2.68px;transform:scaleX(1.0138)">14.08.2025 19:03</span></div><div class="c" style="left:1273.35px;top:427.70px;width:134.90px"><span class="l" style="left:3.00px;transform:scaleX(1.0000)">tabletki.ua</span></div><div class="c" style="left:1409.75px;top:427.70px;width:94.80px"><span class="r" style="right:3.32px;transform:scaleX(0.9719)">1291899</span></div><div class="c" style="left:1506.05px;top:427.70px;width:155.80px"><span class="m" style="left:-1.65px">А</span></div><div class="c" style="left:1663.35px;top:427.70px;width:102.20px"><span class="l" style="left:1.39px;transform:scaleX(1.0155)">Отобран</span></div>
<div class="c" style="left:18.05px;top:456.20px;width:52.50px"><span class="r" style="right:2.92px;transform:scaleX(0.9886)">16614</span></div><div class="c" style="left:72.05px;top:456.20px;width:108.00px"><span class="r" style="right:3.80px;transform:scaleX(0.9834)">9335179316</span></div><div class="c" style="left:181.55px;top:456.20px;width:138.00px"><span class="l" style="left:1.72px;transform:scaleX(0.9721)">M5-8P-4P-57</span></div><div class="c" style="left:321.05px;top:456.20px;width:134.70px"><span class="r" style="right:1.75px;transform:scaleX(1.1733)">2</span></div><div class="c" style="left:457.25px;top:456.20px;width:205.80px"><span class="l" style="left:2.01px;transform:scaleX(0.9868)">Продаж</span></div><div class="c" style="left:664.55px;top:456.20px;width:123.45px"><span class="l" style="left:3.59px;transform:scaleX(1.0064)">12.08.2025 15:57</span></div><div class="c" style="left:792.05px;top:456.20px;width:136.45px"><span class="l" style="left:2.68px;transform:scaleX(1.0138)">14.08.2025 16:57</span></div><div class="c" style="left:1273.35px;top:456.20px;width:134.90px"><span class="l" style="left:3.00px;transform:scaleX(1.0000)">tabletki.ua</span></div><div class="c" style="left:1409.75px;top:456.20px;width:94.80px"><span class="r" style="right:3.32px;transform:scaleX(0.9719)">1291840</span></div><div class="c" style="left:1506.05px;top:456.20px;width:155.80px"><span class="m" style="left:-1.65px">А</span></div><div class="c" style="left:1663.35px;top:456.20px;width:102.20px"><span class="l" style="left:1.39px;transform:scaleX(1.0155)">Отобран</span></div>
<div class="c" style="left:18.05px;top:484.70px;width:52.50px"><span class="r" style="right:2.92px;transform:scaleX(0.9886)">16613</span></div><div class="c" style="left:72.05px;top:484.70px;width:108.00px"><span class="r" style="right:3.80px;transform:scaleX(0.9834)">8151727518</span></div><div class="c" style="left:181.55px;top:484.70px;width:138.00px"><span class="l" style="left:1.72px;transform:scaleX(0.9721)">TK-T5-87-76</span></div><div class="c" style="left:321.05px;top:484.70px;width:134.70px"><span class="r" style="right:1.75px;transform:scaleX(1.1733)">1</span></div><div class="c" style="left:457.25px;top:484.70px;width:205.80px"><span class="l" style="left:2.01px;transform:scaleX(0.9868)">Продаж</span></div><div class="c" style="left:664.55px;top:484.70px;width:123.45px"><span class="l" style="left:3.59px;transform:scaleX(1.0064)">12.08.2025 15:29</span></div><div class="c" style="left:792.05px;top:484.70px;width:136.45px"><span class="l" style="left:2.68px;transform:scaleX(1.0138)">14.08.2025 16:29</span></div><div class="c" style="left:1273.35px;top:484.70px;width:134.90px"><span class="l" style="left:3.00px;transform:scaleX(1.0000)">tabletki.ua</span></div><div class="c" style="left:1409.75px;top:484.70px;width:94.80px"><span class="r" style="right:3.32px;transform:scaleX(0.9719)">1291836</span></div><div class="c" style="left:1506.05px;top:484.70px;width:155.80px"><span class="m" style="left:-1.65px">А</span></div><div class="c" style="left:1663.35px;top:484.70px;width:102.20px"><span class="l" style="left:1.39px;transform:scaleX(1.0155)">Отобран</span></div>
<div class="c" style="left:18.05px;top:513.20px;width:52.50px"><span class="r" style="right:2.92px;transform:scaleX(0.9886)">16612</span></div><div class="c" style="left:72.05px;top:513.20px;width:108.00px"><span class="r" style="right:3.80px;transform:scaleX(0.9834)">9445042622</span></div><div class="c" style="left:181.55px;top:513.20px;width:138.00px"><span class="l" style="left:1.72px;transform:scaleX(0.9721)">2B-6A-BB-77</span></div><div class="c" style="left:321.05px;top:513.20px;width:134.70px"><span class="r" style="right:1.75px;transform:scaleX(1.1733)">1</span></div><div class="c" style="left:457.25px;top:513.20px;width:205.80px"><span class="l" style="left:2.01px;transform:scaleX(0.9868)">Скасування</span></div><div class="c" style="left:664.55px;top:513.20px;width:123.45px"><span class="l" style="left:3.59px;transform:scaleX(1.0064)">12.08.2025 15:09</span></div><div class="c" style="left:792.05px;top:513.20px;width:136.45px"><span class="l" style="left:2.68px;transform:scaleX(1.0138)">14.08.2025 16:09</span></div><div class="c" style="left:1079.85px;top:513.20px;width:189.15px"><span class="l" style="left:2.06px;transform:scaleX(0.9750)">Замовлення було скасовано</span></div><div class="c" style="left:1273.35px;top:513.20px;width:134.90px"><span class="l" style="left:3.00px;transform:scaleX(1.0000)">tabletki.ua</span></div><div class="c" style="left:1409.75px;top:513.20px;width:94.80px"><span class="r" style="right:3.32px;transform:scaleX(0.9719)">1291826</span></div>
<div class="c" style="left:18.05px;top:541.70px;width:52.50px"><span class="r" style="right:2.92px;transform:scaleX(0.9886)">16611</span></div><div class="c" style="left:72.05px;top:541.70px;width:108.00px"><span class="r" style="right:3.80px;transform:scaleX(0.9834)">8713925980</span></div><div class="c" style="left:181.55px;top:541.70px;width:138.00px"><span class="l" style="left:1.72px;transform:scaleX(0.9721)">0X-H0-23-M6</span></div><div class="c" style="left:321.05px;top:541.70px;width:134.70px"><span class="r" style="right:1.75px;transform:scaleX(1.1733)">1</span></div><div class="c" style="left:457.25px;top:541.70px;width:205.80px"><span class="l" style="left:2.01px;transform:scaleX(0.9868)">Продаж</span></div><div class="c" style="left:664.55px;top:541.70px;width:123.45px"><span class="l" style="left:3.59px;transform:scaleX(1.0064)">12.08.2025 15:03</span></div><div class="c" style="left:792.05px;top:541.70px;width:136.45px"><span class="l" style="left:2.68px;transform:scaleX(1.0138)">14.08.2025 16:03</span></div><div class="c" style="left:1273.35px;top:541.70px;width:134.90px"><span class="l" style="left:3.00px;transform:scaleX(1.0000)">tabletki.ua</span></div><div class="c" style="left:1409.75px;top:541.70px;width:94.80px"><span class="r" style="right:3.32px;transform:scaleX(0.9719)">1291825</span></div><div class="c" style="left:1506.05px;top:541.70px;width:155.80px"><span class="m" style="left:-1.65px">А</span></div><div class="c" style="left:1663.35px;top:541.70px;width:102.20px"><span class="l" style="left:1.39px;transform:scaleX(1.0155)">Отобран</span></div>
<div class="c" style="left:18.05px;top:570.20px;width:52.50px"><span class="r" style="right:2.92px;transform:scaleX(0.9886)">16610</span></div><div class="c" style="left:72.05px;top:570.20px;width:108.00px"><span class="r" style="right:3.80px;transform:scaleX(0.9834)">3063830416</span></div><div class="c" style="left:181.55px;top:570.20px;width:138.00px"><span class="l" style="left:1.72px;transform:scaleX(0.9721)">M0-MT-8P-72</span></div><div class="c" style="left:321.05px;top:570.20px;width:134.70px"><span class="r" style="right:1.75px;transform:scaleX(1.1733)">1</span></div><div class="c" style="left:457.25px;top:570.20px;width:205.80px"><span class="l" style="left:2.01px;transform:scaleX(0.9868)">Продаж</span></div><div class="c" style="left:664.55px;top:570.20px;width:123.45px"><span class="l" style="left:3.59px;transform:scaleX(1.0064)">12.08.2025 14:59</span></div><div class="c" style="left:792.05px;top:570.20px;width:136.45px"><span class="l" style="left:2.68px;transform:scaleX(1.0138)">14.08.2025 15:59</span></div><div class="c" style="left:1273.35px;top:570.20px;width:134.90px"><span class="l" style="left:3.00px;transform:scaleX(1.0000)">tabletki.ua</span></div><div class="c" style="left:1409.75px;top:570.20px;width:94.80px"><span class="r" style="right:3.32px;transform:scaleX(0.9719)">1291824</span></div><div class="c" style="left:1506.05px;top:570.20px;width:155.80px"><span class="m" style="left:-1.65px">А</span></div><div class="c" style="left:1663.35px;top:570.20px;width:102.20px"><span class="l" style="left:1.39px;transform:scaleX(1.0155)">Отобран</span></div>
<div class="c" style="left:18.05px;top:598.70px;width:52.50px"><span class="r" style="right:2.92px;transform:scaleX(0.9886)">16609</span></div><div class="c" style="left:72.05px;top:598.70px;width:108.00px"><span class="r" style="right:3.80px;transform:scaleX(0.9834)">3149838054</span></div><div class="c" style="left:181.55px;top:598.70px;width:138.00px"><span class="l" style="left:1.72px;transform:scaleX(0.9721)">H2-K9-64-92</span></div><div class="c" style="left:321.05px;top:598.70px;width:134.70px"><span class="r" style="right:1.75px;transform:scaleX(1.1733)">1</span></div><div class="c" style="left:457.25px;top:598.70px;width:205.80px"><span class="l" style="left:2.01px;transform:scaleX(0.9868)">Продаж</span></div><div class="c" style="left:664.55px;top:598.70px;width:123.45px"><span class="l" style="left:3.59px;transform:scaleX(1.0064)">12.08.2025 14:41</span></div><div class="c" style="left:792.05px;top:598.70px;width:136.45px"><span class="l" style="left:2.68px;transform:scaleX(1.0138)">14.08.2025 15:41</span></div><div class="c" style="left:1273.35px;top:598.70px;width:134.90px"><span class="l" style="left:3.00px;transform:scaleX(1.0000)">tabletki.ua</span></div><div class="c" style="left:1409.75px;top:598.70px;width:94.80px"><span class="r" style="right:3.32px;transform:scaleX(0.9719)">1291813</span></div><div class="c" style="left:1506.05px;top:598.70px;width:155.80px"><span class="m" style="left:-1.65px">А</span></div><div class="c" style="left:1663.35px;top:598.70px;width:102.20px"><span class="l" style="left:1.39px;transform:scaleX(1.0155)">Отобран</span></div>
<div class="c" style="left:18.05px;top:627.20px;width:52.50px"><span class="r" style="right:2.92px;transform:scaleX(0.9886)">16608</span></div><div class="c" style="left:72.05px;top:627.20px;width:108.00px"><span class="r" style="right:3.80px;transform:scaleX(0.9834)">5711371186</span></div><div class="c" style="left:181.55px;top:627.20px;width:138.00px"><span class="l" style="left:1.72px;transform:scaleX(0.9721)">6X-71-M4-94</span></div><div class="c" style="left:321.05px;top:627.20px;width:134.70px"><span class="r" style="right:1.75px;transform:scaleX(1.1733)">2</span></div><div class="c" style="left:457.25px;top:627.20px;width:205.80px"><span class="l" style="left:2.01px;transform:scaleX(0.9868)">Продаж</span></div><div class="c" style="left:664.55px;top:627.20px;width:123.45px"><span class="l" style="left:3.59px;transform:scaleX(1.0064)">12.08.2025 14:19</span></div><div class="c" style="left:792.05px;top:627.20px;width:136.45px"><span class="l" style="left:2.68px;transform:scaleX(1.0138)">14.08.2025 15:19</span></div><div class="c" style="left:1273.35px;top:627.20px;width:134.90px"><span class="l" style="left:3.00px;transform:scaleX(1.0000)">tabletki.ua</span></div><div class="c" style="left:1409.75px;top:627.20px;width:94.80px"><span class="r" style="right:3.32px;transform:scaleX(0.9719)">1291804</span></div><div class="c" style="left:1506.05px;top:627.20px;width:155.80px"><span class="m" style="left:-1.65px">А</span></div><div class="c" style="left:1663.35px;top:627.20px;width:102.20px"><span class="l" style="left:1.39px;transform:scaleX(1.0155)">Отобран</span></div>
<div class="c" style="left:18.05px;top:655.70px;width:52.50px"><span class="r" style="right:2.92px;transform:scaleX(0.9886)">16607</span></div><div class="c" style="left:72.05px;top:655.70px;width:108.00px"><span class="r" style="right:3.80px;transform:scaleX(0.9834)">2892279205</span></div><div class="c" style="left:181.55px;top:655.70px;width:138.00px"><span class="l" style="left:1.72px;transform:scaleX(0.9721)">50-TH-M3-52</span></div><div class="c" style="left:321.05px;top:655.70px;width:134.70px"><span class="r" style="right:1.75px;transform:scaleX(1.1733)">1</span></div><div class="c" style="left:457.25px;top:655.70px;width:205.80px"><span class="l" style="left:2.01px;transform:scaleX(0.9868)">Оброблено в аптеці</span></div><div class="c" style="left:664.55px;top:655.70px;width:123.45px"><span class="l" style="left:3.59px;transform:scaleX(1.0064)">12.08.2025 13:25</span></div><div class="c" style="left:792.05px;top:655.70px;width:136.45px"><span class="l" style="left:2.68px;transform:scaleX(1.0138)">14.08.2025 14:25</span></div><div class="c" style="left:1273.35px;top:655.70px;width:134.90px"><span class="l" style="left:3.00px;transform:scaleX(1.0000)">tabletki.ua</span></div><div class="c" style="left:1409.75px;top:655.70px;width:94.80px"><span class="r" style="right:3.32px;transform:scaleX(0.9719)">1291767</span></div><div class="c" style="left:1506.05px;top:655.70px;width:155.80px"><span class="m" style="left:-1.65px">П</span></div><div class="c" style="left:1663.35px;top:655.70px;width:102.20px"><span class="l" style="left:1.39px;transform:scaleX(1.0155)">Отобран</span></div>
<div class="c" style="left:18.05px;top:684.20px;width:52.50px"><span class="r" style="right:2.92px;transform:scaleX(0.9886)">16606</span></div><div class="c" style="left:72.05px;top:684.20px;width:108.00px"><span class="r" style="right:3.80px;transform:scaleX(0.9834)">5196921668</span></div><div class="c" style="left:181.55px;top:684.20px;width:138.00px"><span class="l" style="left:1.72px;transform:scaleX(0.9721)">83-4K-04-14</span></div><div class="c" style="left:321.05px;top:684.20px;width:134.70px"><span class="r" style="right:1.75px;transform:scaleX(1.1733)">1</span></div><div class="c" style="left:457.25px;top:684.20px;width:205.80px"><span class="l" style="left:2.01px;transform:scaleX(0.9868)">Оброблено в аптеці</span></div><div class="c" style="left:664.55px;top:684.20px;width:123.45px"><span class="l" style="left:3.59px;transform:scaleX(1.0064)">12.08.2025 13:01</span></div><div class="c" style="left:792.05px;top:684.20px;width:136.45px"><span class="l" style="left:2.68px;transform:scaleX(1.0138)">14.08.2025 14:01</span></div><div class="c" style="left:1273.35px;top:684.20px;width:134.90px"><span class="l" style="left:3.00px;transform:scaleX(1.0000)">tabletki.ua</span></div><div class="c" style="left:1409.75px;top:684.20px;width:94.80px"><span class="r" style="right:3.32px;transform:scaleX(0.9719)">1291753</span></div><div class="c" style="left:1506.05px;top:684.20px;width:155.80px"><span class="m" style="left:-1.65px">П</span></div><div class="c" style="left:1663.35px;top:684.20px;width:102.20px"><span class="l" style="left:1.39px;transform:scaleX(1.0155)">Отобран</span></div>
<div class="c" style="left:18.05px;top:712.70px;width:52.50px"><span class="r" style="right:2.92px;transform:scaleX(0.9886)">16605</span></div><div class="c" style="left:72.05px;top:712.70px;width:108.00px"><span class="r" style="right:3.80px;transform:scaleX(0.9834)">9022812320</span></div><div class="c" style="left:181.55px;top:712.70px;width:138.00px"><span class="l" style="left:1.72px;transform:scaleX(0.9721)">0M-AB-CX-07</span></div><div class="c" style="left:321.05px;top:712.70px;width:134.70px"><span class="r" style="right:1.75px;transform:scaleX(1.1733)">3</span></div><div class="c" style="left:457.25px;top:712.70px;width:205.80px"><span class="l" style="left:2.01px;transform:scaleX(0.9868)">Продаж</span></div><div class="c" style="left:664.55px;top:712.70px;width:123.45px"><span class="l" style="left:3.59px;transform:scaleX(1.0064)">12.08.2025 12:25</span></div><div class="c" style="left:792.05px;top:712.70px;width:136.45px"><span class="l" style="left:2.68px;transform:scaleX(1.0138)">14.08.2025 13:25</span></div><div class="c" style="left:1273.35px;top:712.70px;width:134.90px"><span class="l" style="left:3.00px;transform:scaleX(1.0000)">tabletki.ua</span></div><div class="c" style="left:1409.75px;top:712.70px;width:94.80px"><span class="r" style="right:3.32px;transform:scaleX(0.9719)">1291725</span></div><div class="c" style="left:1506.05px;top:712.70px;width:155.80px"><span class="m" style="left:-1.65px">А</span></div><div class="c" style="left:1663.35px;top:712.70px;width:102.20px"><span class="l" style="left:1.39px;transform:scaleX(1.0155)">Отобран</span></div>
<div class="c" style="left:18.05px;top:741.20px;width:52.50px"><span class="r" style="right:2.92px;transform:scaleX(0.9886)">16604</span></div><div class="c" style="left:72.05px;top:741.20px;width:108.00px"><span class="r" style="right:3.80px;transform:scaleX(0.9834)">4724720832</span></div><div class="c" style="left:181.55px;top:741.20px;width:138.00px"><span class="l" style="left:1.72px;transform:scaleX(0.9721)">C1-2A-9M-E3</span></div><div class="c" style="left:321.05px;top:741.20px;width:134.70px"><span class="r" style="right:1.75px;transform:scaleX(1.1733)">1</span></div><div class="c" style="left:457.25px;top:741.20px;width:205.80px"><span class="l" style="left:2.01px;transform:scaleX(0.9868)">Оброблено в аптеці</span></div><div class="c" style="left:664.55px;top:741.20px;width:123.45px"><span class="l" style="left:3.59px;transform:scaleX(1.0064)">12.08.2025 12:09</span></div><div class="c" style="left:792.05px;top:741.20px;width:136.45px"><span class="l" style="left:2.68px;transform:scaleX(1.0138)">14.08.2025 13:09</span></div><div class="c" style="left:1273.35px;top:741.20px;width:134.90px"><span class="l" style="left:3.00px;transform:scaleX(1.0000)">tabletki.ua</span></div><div class="c" style="left:1409.75px;top:741.20px;width:94.80px"><span class="r" style="right:3.32px;transform:scaleX(0.9719)">1291716</span></div><div class="c" style="left:1506.05px;top:741.20px;width:155.80px"><span class="m" style="left:-1.65px">П</span></div><div class="c" style="left:1663.35px;top:741.20px;width:102.20px"><span class="l" style="left:1.39px;transform:scaleX(1.0155)">Отобран</span></div>
<div class="c" style="left:18.05px;top:769.70px;width:52.50px"><span class="r" style="right:2.92px;transform:scaleX(0.9886)">16603</span></div><div class="c" style="left:72.05px;top:769.70px;width:108.00px"><span class="r" style="right:3.80px;transform:scaleX(0.9834)">2396099684</span></div><div class="c" style="left:181.55px;top:769.70px;width:138.00px"><span class="l" style="left:1.72px;transform:scaleX(0.9721)">44-9C-K8-P1</span></div><div class="c" style="left:321.05px;top:769.70px;width:134.70px"><span class="r" style="right:1.75px;transform:scaleX(1.1733)">2</span></div><div class="c" style="left:457.25px;top:769.70px;width:205.80px"><span class="l" style="left:2.01px;transform:scaleX(0.9868)">Продаж</span></div><div class="c" style="left:664.55px;top:769.70px;width:123.45px"><span class="l" style="left:3.59px;transform:scaleX(1.0064)">12.08.2025 11:11</span></div><div class="c" style="left:792.05px;top:769.70px;width:136.45px"><span class="l" style="left:2.68px;transform:scaleX(1.0138)">14.08.2025 12:11</span></div><div class="c" style="left:1273.35px;top:769.70px;width:134.90px"><span class="l" style="left:3.00px;transform:scaleX(1.0000)">tabletki.ua</span></div><div class="c" style="left:1409.75px;top:769.70px;width:94.80px"><span class="r" style="right:3.32px;transform:scaleX(0.9719)">1291670</span></div><div class="c" style="left:1506.05px;top:769.70px;width:155.80px"><span class="m" style="left:-1.65px">А</span></div><div class="c" style="left:1663.35px;top:769.70px;width:102.20px"><span class="l" style="left:1.39px;transform:scaleX(1.0155)">Отобран</span></div>
<div class="c" style="left:18.05px;top:798.20px;width:52.50px"><span class="r" style="right:2.92px;transform:scaleX(0.9886)">16601</span></div><div class="c" style="left:72.05px;top:798.20px;width:108.00px"><span class="r" style="right:3.80px;transform:scaleX(0.9834)">7157140480</span></div><div class="c" style="left:181.55px;top:798.20px;width:138.00px"><span class="l" style="left:1.72px;transform:scaleX(0.9721)">04-B2-CM-B5</span></div><div class="c" style="left:321.05px;top:798.20px;width:134.70px"><span class="r" style="right:1.75px;transform:scaleX(1.1733)">1</span></div><div class="c" style="left:457.25px;top:798.20px;width:205.80px"><span class="l" style="left:2.01px;transform:scaleX(0.9868)">Оброблено в аптеці</span></div><div class="c" style="left:664.55px;top:798.20px;width:123.45px"><span class="l" style="left:3.59px;transform:scaleX(1.0064)">12.08.2025 10:43</span></div><div class="c" style="left:792.05px;top:798.20px;width:136.45px"><span class="l" style="left:2.68px;transform:scaleX(1.0138)">14.08.2025 11:43</span></div><div class="c" style="left:1273.35px;top:798.20px;width:134.90px"><span class="l" style="left:3.00px;transform:scaleX(1.0000)">tabletki.ua</span></div><div class="c" style="left:1409.75px;top:798.20px;width:94.80px"><span class="r" style="right:3.32px;transform:scaleX(0.9719)">1291645</span></div><div class="c" style="left:1506.05px;top:798.20px;width:155.80px"><span class="m" style="left:-1.65px">П</span></div><div class="c" style="left:1663.35px;top:798.20px;width:102.20px"><span class="l" style="left:1.39px;transform:scaleX(1.0155)">Отобран</span></div>
<div class="c" style="left:18.05px;top:826.70px;width:52.50px"><span class="r" style="right:2.92px;transform:scaleX(0.9886)">16602</span></div><div class="c" style="left:72.05px;top:826.70px;width:108.00px"><span class="r" style="right:3.80px;transform:scaleX(0.9834)">4245001702</span></div><div class="c" style="left:181.55px;top:826.70px;width:138.00px"><span class="l" style="left:1.72px;transform:scaleX(0.9721)">25-45-B6-63</span></div><div class="c" style="left:321.05px;top:826.70px;width:134.70px"><span class="r" style="right:1.75px;transform:scaleX(1.1733)">1</span></div><div class="c" style="left:457.25px;top:826.70px;width:205.80px"><span class="l" style="left:2.01px;transform:scaleX(0.9868)">Продаж</span></div><div class="c" style="left:664.55px;top:826.70px;width:123.45px"><span class="l" style="left:3.59px;transform:scaleX(1.0064)">12.08.2025 10:43</span></div><div class="c" style="left:792.05px;top:826.70px;width:136.45px"><span class="l" style="left:2.68px;transform:scaleX(1.0138)">14.08.2025 11:43</span></div><div class="c" style="left:1273.35px;top:826.70px;width:134.90px"><span class="l" style="left:3.00px;transform:scaleX(1.0000)">tabletki.ua</span></div><div class="c" style="left:1409.75px;top:826.70px;width:94.80px"><span class="r" style="right:3.32px;transform:scaleX(0.9719)">1291646</span></div><div class="c" style="left:1506.05px;top:826.70px;width:155.80px"><span class="m" style="left:-1.65px">А</span></div><div class="c" style="left:1663.35px;top:826.70px;width:102.20px"><span class="l" style="left:1.39px;transform:scaleX(1.0155)">Отобран</span></div>
<div class="c" style="left:18.05px;top:855.20px;width:52.50px"><span class="r" style="right:2.92px;transform:scaleX(0.9886)">16600</span></div><div class="c" style="left:72.05px;top:855.20px;width:108.00px"><span class="r" style="right:3.80px;transform:scaleX(0.9834)">7735588244</span></div><div class="c" style="left:181.55px;top:855.20px;width:138.00px"><span class="l" style="left:1.72px;transform:scaleX(0.9721)">4C-A8-7P-06</span></div><div class="c" style="left:321.05px;top:855.20px;width:134.70px"><span class="r" style="right:1.75px;transform:scaleX(1.1733)">1</span></div><div class="c" style="left:457.25px;top:855.20px;width:205.80px"><span class="l" style="left:2.01px;transform:scaleX(0.9868)">Продаж</span></div><div class="c" style="left:664.55px;top:855.20px;width:123.45px"><span class="l" style="left:3.59px;transform:scaleX(1.0064)">12.08.2025 09:35</span></div><div class="c" style="left:792.05px;top:855.20px;width:136.45px"><span class="l" style="left:2.68px;transform:scaleX(1.0138)">14.08.2025 10:35</span></div><div class="c" style="left:1273.35px;top:855.20px;width:134.90px"><span class="l" style="left:3.00px;transform:scaleX(1.0000)">tabletki.ua</span></div><div class="c" style="left:1409.75px;top:855.20px;width:94.80px"><span class="r" style="right:3.32px;transform:scaleX(0.9719)">1291582</span></div><div class="c" style="left:1506.05px;top:855.20px;width:155.80px"><span class="m" style="left:-1.65px">А</span></div><div class="c" style="left:1663.35px;top:855.20px;width:102.20px"><span class="l" style="left:1.39px;transform:scaleX(1.0155)">Отобран</span></div>
<div class="c" style="left:18.05px;top:883.70px;width:52.50px"><span class="r" style="right:2.92px;transform:scaleX(0.9886)">16599</span></div><div class="c" style="left:72.05px;top:883.70px;width:108.00px"><span class="r" style="right:3.80px;transform:scaleX(0.9834)">2017303320</span></div><div class="c" style="left:181.55px;top:883.70px;width:138.00px"><span class="l" style="left:1.72px;transform:scaleX(0.9721)">06-T2-8A-B1</span></div><div class="c" style="left:321.05px;top:883.70px;width:134.70px"><span class="r" style="right:1.75px;transform:scaleX(1.1733)">1</span></div><div class="c" style="left:457.25px;top:883.70px;width:205.80px"><span class="l" style="left:2.01px;transform:scaleX(0.9868)">Продаж</span></div><div class="c" style="left:664.55px;top:883.70px;width:123.45px"><span class="l" style="left:3.59px;transform:scaleX(1.0064)">12.08.2025 09:21</span></div><div class="c" style="left:792.05px;top:883.70px;width:136.45px"><span class="l" style="left:2.68px;transform:scaleX(1.0138)">14.08.2025 10:21</span></div><div class="c" style="left:1273.35px;top:883.70px;width:134.90px"><span class="l" style="left:3.00px;transform:scaleX(1.0000)">tabletki.ua</span></div><div class="c" style="left:1409.75px;top:883.70px;width:94.80px"><span class="r" style="right:3.32px;transform:scaleX(0.9719)">1291568</span></div><div class="c" style="left:1506.05px;top:883.70px;width:155.80px"><span class="m" style="left:-1.65px">А</span></div><div class="c" style="left:1663.35px;top:883.70px;width:102.20px"><span class="l" style="left:1.39px;transform:scaleX(1.0155)">Отобран</span></div>
<div class="c" style="left:18.05px;top:912.20px;width:52.50px"><span class="r" style="right:2.92px;transform:scaleX(0.9886)">16598</span></div><div class="c" style="left:72.05px;top:912.20px;width:108.00px"><span class="r" style="right:3.80px;transform:scaleX(0.9834)">7889172742</span></div><div class="c" style="left:181.55px;top:912.20px;width:138.00px"><span class="l" style="left:1.72px;transform:scaleX(0.9721)">2P-B6-75-36</span></div><div class="c" style="left:321.05px;top:912.20px;width:134.70px"><span class="r" style="right:1.75px;transform:scaleX(1.1733)">1</span></div><div class="c" style="left:457.25px;top:912.20px;width:205.80px"><span class="l" style="left:2.01px;transform:scaleX(0.9868)">Оброблено в аптеці</span></div><div class="c" style="left:664.55px;top:912.20px;width:123.45px"><span class="l" style="left:3.59px;transform:scaleX(1.0064)">12.08.2025 09:13</span></div><div class="c" style="left:792.05px;top:912.20px;width:136.45px"><span class="l" style="left:2.68px;transform:scaleX(1.0138)">14.08.2025 10:13</span></div><div class="c" style="left:1273.35px;top:912.20px;width:134.90px"><span class="l" style="left:3.00px;transform:scaleX(1.0000)">tabletki.ua</span></div><div class="c" style="left:1409.75px;top:912.20px;width:94.80px"><span class="r" style="right:3.32px;transform:scaleX(0.9719)">1291563</span></div><div class="c" style="left:1506.05px;top:912.20px;width:155.80px"><span class="m" style="left:-1.65px">П</span></div><div class="c" style="left:1663.35px;top:912.20px;width:102.20px"><span class="l" style="left:1.39px;transform:scaleX(1.0155)">Отобран</span></div>
<div class="c" style="left:18.05px;top:940.70px;width:52.50px"><span class="r" style="right:2.92px;transform:scaleX(0.9886)">16597</span></div><div class="c" style="left:72.05px;top:940.70px;width:108.00px"><span class="r" style="right:3.80px;transform:scaleX(0.9834)">8013083028</span></div><div class="c" style="left:181.55px;top:940.70px;width:138.00px"><span class="l" style="left:1.72px;transform:scaleX(0.9721)">8B-7K-14-56</span></div><div class="c" style="left:321.05px;top:940.70px;width:134.70px"><span class="r" style="right:1.75px;transform:scaleX(1.1733)">2</span></div><div class="c" style="left:457.25px;top:940.70px;width:205.80px"><span class="l" style="left:2.01px;transform:scaleX(0.9868)">Продаж</span></div><div class="c" style="left:664.55px;top:940.70px;width:123.45px"><span class="l" style="left:3.59px;transform:scaleX(1.0064)">12.08.2025 08:51</span></div><div class="c" style="left:792.05px;top:940.70px;width:136.45px"><span class="l" style="left:2.68px;transform:scaleX(1.0138)">14.08.2025 09:51</span></div><div class="c" style="left:1273.35px;top:940.70px;width:134.90px"><span class="l" style="left:3.00px;transform:scaleX(1.0000)">tabletki.ua</span></div><div class="c" style="left:1409.75px;top:940.70px;width:94.80px"><span class="r" style="right:3.32px;transform:scaleX(0.9719)">1291539</span></div><div class="c" style="left:1506.05px;top:940.70px;width:155.80px"><span class="m" style="left:-1.65px">А</span></div><div class="c" style="left:1663.35px;top:940.70px;width:102.20px"><span class="l" style="left:1.39px;transform:scaleX(1.0155)">Отобран</span></div>
<div class="c" style="left:18.05px;top:969.20px;width:52.50px"><span class="r" style="right:2.92px;transform:scaleX(0.9886)">16596</span></div><div class="c" style="left:72.05px;top:969.20px;width:108.00px"><span class="r" style="right:3.80px;transform:scaleX(0.9834)">6832332304</span></div><div class="c" style="left:181.55px;top:969.20px;width:138.00px"><span class="l" style="left:1.72px;transform:scaleX(0.9721)">4K-A1-2K-65</span></div><div class="c" style="left:321.05px;top:969.20px;width:134.70px"><span class="r" style="right:1.75px;transform:scaleX(1.1733)">1</span></div><div class="c" style="left:457.25px;top:969.20px;width:205.80px"><span class="l" style="left:2.01px;transform:scaleX(0.9868)">Продаж</span></div><div class="c" style="left:664.55px;top:969.20px;width:123.45px"><span class="l" style="left:3.59px;transform:scaleX(1.0064)">12.08.2025 08:03</span></div><div class="c" style="left:792.05px;top:969.20px;width:136.45px"><span class="l" style="left:2.68px;transform:scaleX(1.0138)">14.08.2025 09:03</span></div><div class="c" style="left:1273.35px;top:969.20px;width:134.90px"><span class="l" style="left:3.00px;transform:scaleX(1.0000)">tabletki.ua</span></div><div class="c" style="left:1409.75px;top:969.20px;width:94.80px"><span class="r" style="right:3.32px;transform:scaleX(0.9719)">1291504</span></div><div class="c" style="left:1506.05px;top:969.20px;width:155.80px"><span class="m" style="left:-1.65px">А</span></div><div class="c" style="left:1663.35px;top:969.20px;width:102.20px"><span class="l" style="left:1.39px;transform:scaleX(1.0155)">Отобран</span></div>
<div class="c" style="left:18.05px;top:997.70px;width:52.50px"><span class="r" style="right:2.92px;transform:scaleX(0.9886)">16595</span></div><div class="c" style="left:72.05px;top:997.70px;width:108.00px"><span class="r" style="right:3.80px;transform:scaleX(0.9834)">1330956106</span></div><div class="c" style="left:181.55px;top:997.70px;width:138.00px"><span class="l" style="left:1.72px;transform:scaleX(0.9721)">65-A9-TK-01</span></div><div class="c" style="left:321.05px;top:997.70px;width:134.70px"><span class="r" style="right:1.75px;transform:scaleX(1.1733)">4</span></div><div class="c" style="left:457.25px;top:997.70px;width:205.80px"><span class="l" style="left:2.01px;transform:scaleX(0.9868)">Продаж</span></div><div class="c" style="left:664.55px;top:997.70px;width:123.45px"><span class="l" style="left:3.59px;transform:scaleX(1.0064)">12.08.2025 07:26</span></div><div class="c" style="left:792.05px;top:997.70px;width:136.45px"><span class="l" style="left:2.68px;transform:scaleX(1.0138)">14.08.2025 08:26</span></div><div class="c" style="left:1273.35px;top:997.70px;width:134.90px"><span class="l" style="left:3.00px;transform:scaleX(1.0000)">tabletki.ua</span></div><div class="c" style="left:1409.75px;top:997.70px;width:94.80px"><span class="r" style="right:3.32px;transform:scaleX(0.9719)">1291493</span></div><div class="c" style="left:1506.05px;top:997.70px;width:155.80px"><span class="m" style="left:-1.65px">А</span></div><div class="c" style="left:1663.35px;top:997.70px;width:102.20px"><span class="l" style="left:1.39px;transform:scaleX(1.0155)">Отобран</span></div>
<div class="c" style="left:18.05px;top:1026.20px;width:52.50px"><span class="r" style="right:2.92px;transform:scaleX(0.9886)">16594</span></div><div class="c" style="left:72.05px;top:1026.20px;width:108.00px"><span class="r" style="right:3.80px;transform:scaleX(0.9834)">3923853400</span></div><div class="c" style="left:181.55px;top:1026.20px;width:138.00px"><span class="l" style="left:1.72px;transform:scaleX(0.9721)">0A-E1-46-13</span></div><div class="c" style="left:321.05px;top:1026.20px;width:134.70px"><span class="r" style="right:1.75px;transform:scaleX(1.1733)">1</span></div><div class="c" style="left:457.25px;top:1026.20px;width:205.80px"><span class="l" style="left:2.01px;transform:scaleX(0.9868)">Продаж</span></div><div class="c" style="left:664.55px;top:1026.20px;width:123.45px"><span class="l" style="left:3.59px;transform:scaleX(1.0064)">12.08.2025 07:14</span></div><div class="c" style="left:792.05px;top:1026.20px;width:136.45px"><span class="l" style="left:2.68px;transform:scaleX(1.0138)">14.08.2025 08:14</span></div><div class="c" style="left:1273.35px;top:1026.20px;width:134.90px"><span class="l" style="left:3.00px;transform:scaleX(1.0000)">tabletki.ua</span></div><div class="c" style="left:1409.75px;top:1026.20px;width:94.80px"><span class="r" style="right:3.32px;transform:scaleX(0.9719)">1291487</span></div><div class="c" style="left:1506.05px;top:1026.20px;width:155.80px"><span class="m" style="left:-1.65px">А</span></div><div class="c" style="left:1663.35px;top:1026.20px;width:102.20px"><span class="l" style="left:1.39px;transform:scaleX(1.0155)">Отобран</span></div>
<svg style="left:5.6px;top:178px" width="9" height="15" viewBox="0 0 9 15"><path d="M0.4 0.3 l7.7 7 l-7.7 7 z" fill="#000"/></svg>
</div>
<div id="vscroll"></div><div id="thumb"></div><svg style="left:2136px;top:209px" width="13" height="11" viewBox="0 0 13 11"><path d="M1 8.8 l5.4 -5.6 l5.4 5.6" fill="none" stroke="#5a5a5a" stroke-width="2.7"/></svg><svg style="left:2136px;top:1226px" width="13" height="11" viewBox="0 0 13 11"><path d="M1 2.2 l5.4 5.6 l5.4 -5.6" fill="none" stroke="#5a5a5a" stroke-width="2.7"/></svg><div id="nav"></div><div id="hscroll"></div>
<div class="nb" style="left:8.7px"></div><div class="nb" style="left:124.2px"></div><div class="nb" style="left:151.2px"></div><svg style="left:12px;top:1252px" width="17" height="13" viewBox="0 0 17 13"><rect x="0.8" y="0.5" width="1.8" height="11.5" fill="#222"/><path d="M9 0.5 v11.5 l-6 -5.75 z M15.4 0.5 v11.5 l-6 -5.75 z" fill="#333"/></svg><svg style="left:127.5px;top:1252px" width="17" height="13" viewBox="0 0 17 13"><rect x="14.2" y="0.5" width="1.8" height="11.5" fill="#222"/><path d="M1.4 0.5 v11.5 l6 -5.75 z M7.8 0.5 v11.5 l6 -5.75 z" fill="#333"/></svg><svg style="left:156px;top:1252px" width="14" height="13" viewBox="0 0 14 13"><path d="M0.8 0.8 h11.6 v3.4 l-4 3.6 v4 h-3.6 v-4 l-4 -3.6 z" fill="#f57c00"/><rect x="2.6" y="2" width="8" height="1.4" fill="#ffd7a8"/></svg><span class="t" style="left:42.26px;top:1250.73px;font-size:16.5px;transform:scaleX(0.9929);">21 из 215</span><svg style="left:258px;top:1251px" width="11" height="15" viewBox="0 0 11 15"><path d="M8.6 1.6 l-6 5.8 l6 5.8" fill="none" stroke="#b8b8b8" stroke-width="2.4"/></svg><svg style="left:2111px;top:1251px" width="11" height="15" viewBox="0 0 11 15"><path d="M2.4 1.6 l6 5.8 l-6 5.8" fill="none" stroke="#b8b8b8" stroke-width="2.4"/></svg>
<div style="left:25px;top:371px;width:1747px;height:34px;border:4.2px solid #fe0000;border-radius:2px"></div>
<svg style="left:0;top:0" width="2160" height="1276" viewBox="0 0 2160 1276"><path d="M890.45 54.83 L527.76 366.26 L530.2 369.6 L512.7 374.6 L520.0 357.4 L522.34 359.84 L889.55 53.77 z" fill="#fe0000"/></svg>
</body></html>
